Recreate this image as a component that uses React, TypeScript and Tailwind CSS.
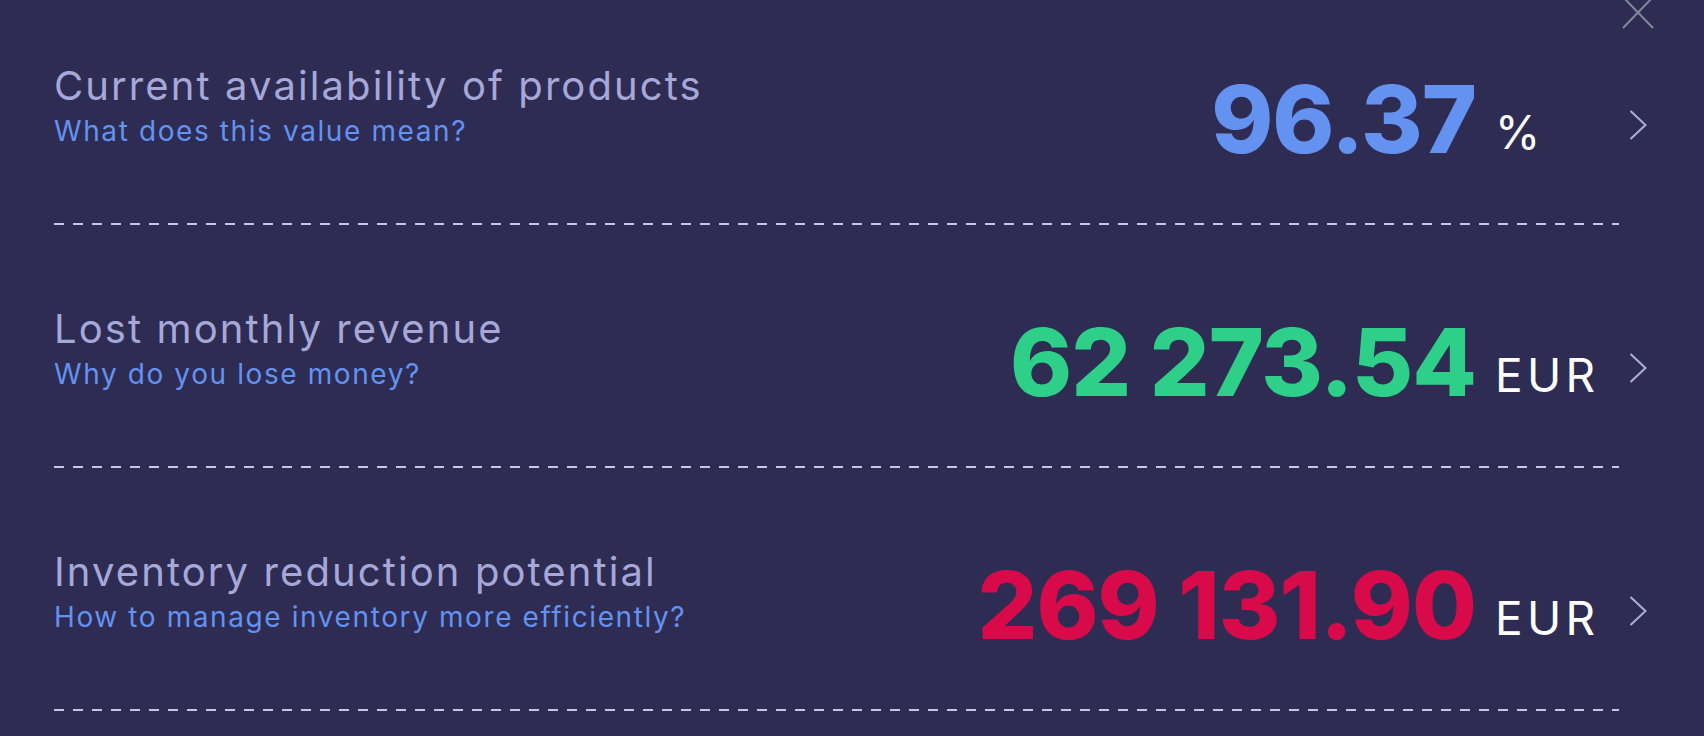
const rows = [
  {
    title: "Current availability of products",
    hint: "What does this value mean?",
    value: "96.37",
    unit: "%",
    color: "text-[#6392f1]",
  },
  {
    title: "Lost monthly revenue",
    hint: "Why do you lose money?",
    value: "62 273.54",
    unit: "EUR",
    color: "text-[#2ecf88]",
  },
  {
    title: "Inventory reduction potential",
    hint: "How to manage inventory more efficiently?",
    value: "269 131.90",
    unit: "EUR",
    color: "text-[#d80a4a]",
  },
];

const Chevron = () => (
  <svg width="18" height="30" viewBox="0 0 18 30" fill="none">
    <path d="M1.5 1 L16.5 15 L1.5 29" stroke="#a7b1d9" strokeWidth="2" />
  </svg>
);

const StatRow = ({ row }: { row: (typeof rows)[number] }) => {
  return (
    <div>
      <div className="flex items-start h-[161px]">
        <div className="flex-1 flex flex-col">
          <h2 className="text-[40px] leading-[48px] tracking-[2.1px] text-[#a5a8d9] font-normal">
            {row.title}
          </h2>
          <a className="mt-[4px] text-[28px] leading-[34px] tracking-[1.6px] text-[#6392f1] cursor-pointer">
            {row.hint}
          </a>
        </div>
        <div className={`mt-[10px] text-[94px] leading-[94px] font-extrabold tracking-[-1px] whitespace-nowrap ${row.color}`}>
          {row.value}
        </div>
        <div className="mt-[47px] ml-[19px] w-[102px] text-[46px] leading-[46px] tracking-[4.3px] text-white">
          {row.unit}
        </div>
        <div className="mt-[48px] ml-[32px]">
          <Chevron />
        </div>
      </div>
      <div className="h-[2px] mr-[28px] mb-[80px] bg-[repeating-linear-gradient(to_right,#c5c8e0_0_10px,transparent_10px_19px)]" />
    </div>
  );
};

export default function App() {
  return (
    <div className="relative h-screen w-full overflow-hidden bg-[#2e2c52] font-['Inter',sans-serif]">
      <button className="absolute left-[1622px] top-[-4px]">
        <svg width="32" height="33" viewBox="0 0 32 33" fill="none">
          <path d="M1 1 L31 32 M31 1 L1 32" stroke="#7f8999" strokeWidth="2" />
        </svg>
      </button>
      <div className="pt-[62px] pl-[54px] pr-[57px]">
        {rows.map((row) => (
          <StatRow key={row.title} row={row} />
        ))}
      </div>
    </div>
  );
}
